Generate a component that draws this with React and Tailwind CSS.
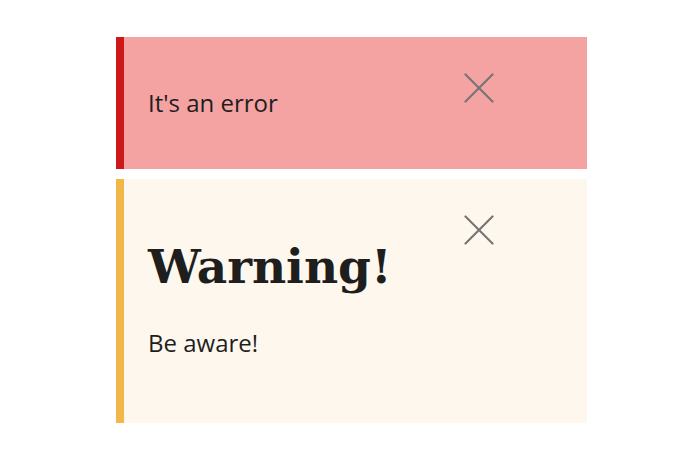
import React from "react";

function CloseIcon() {
  return (
    <svg width="30" height="30" viewBox="0 0 30 30" fill="none" stroke="#757575" strokeWidth="2.2" strokeLinecap="round">
      <line x1="1.5" y1="1.5" x2="28.5" y2="28.5" />
      <line x1="28.5" y1="1.5" x2="1.5" y2="28.5" />
    </svg>
  );
}

function Notice({ tone, children, className }) {
  const tones = {
    error: "bg-[#f4a2a2] border-[#cc1818]",
    warning: "bg-[#fef7ed] border-[#f0b849]",
  };
  return (
    <div className={`relative border-l-8 ${tones[tone]} ${className}`}>
      {children}
      <button className="absolute top-[36px] right-[93px] p-0">
        <CloseIcon />
      </button>
    </div>
  );
}

export default function App() {
  const sans = { fontFamily: '"Open Sans", "Noto Sans", sans-serif' };
  return (
    <div className="w-[692px] h-[464px] bg-white pt-[37px] pl-[116px]">
      <div className="w-[471px] flex flex-col gap-[10px] text-[#1e1e1e]">
        <Notice tone="error" className="h-[132px] flex items-center pl-[24px]">
          <p className="text-[24px]" style={sans}>It's an error</p>
        </Notice>
        <Notice tone="warning" className="h-[244px] pl-[24px] pt-[60px]">
          <h2
            className="text-[47px] font-bold leading-[56px]"
            style={{ fontFamily: '"DejaVu Serif", serif' }}
          >
            Warning!
          </h2>
          <p className="text-[24px] leading-[32px] mt-[32px]" style={sans}>Be aware!</p>
        </Notice>
      </div>
    </div>
  );
}
